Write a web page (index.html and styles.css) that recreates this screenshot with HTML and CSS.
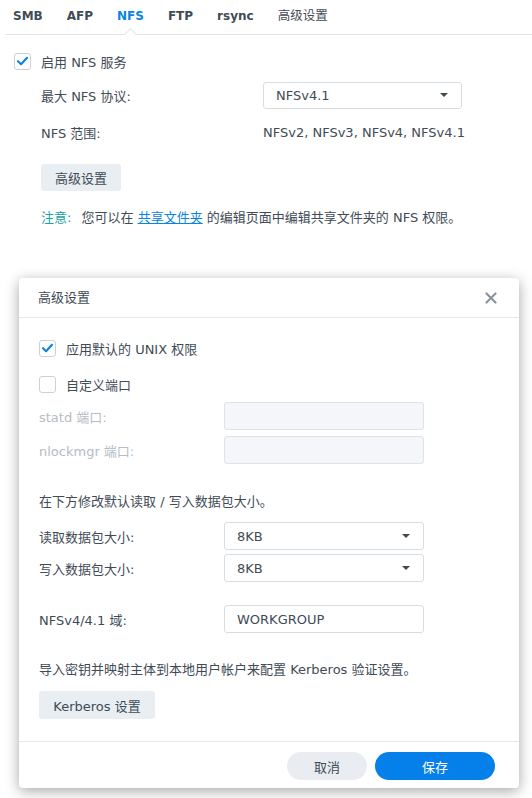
FILE: index.html
```html
<!DOCTYPE html>
<html lang="zh">
<head>
<meta charset="utf-8">
<link rel="stylesheet" href="styles.css">
</head>
<body>
<div class="page">
  <div class="tabs">
    <span class="tab">SMB</span>
    <span class="tab">AFP</span>
    <span class="tab active">NFS</span>
    <span class="tab">FTP</span>
    <span class="tab">rsync</span>
    <span class="tab">高级设置</span>
  </div>
  <div class="form">
    <label class="check-row">
      <span class="cb checked"><svg viewBox="0 0 16 16" width="16" height="16"><path d="M3.2 8.2 L6.5 11.4 L12.8 4.6" fill="none" stroke="#0a84e0" stroke-width="2.2" stroke-linecap="round" stroke-linejoin="round"/></svg></span>
      <span>启用 NFS 服务</span>
    </label>
    <div class="field-row r-select">
      <span class="lbl">最大 NFS 协议:</span>
      <div class="select wide"><span>NFSv4.1</span><span class="caret"></span></div>
    </div>
    <div class="field-row r-range">
      <span class="lbl">NFS 范围:</span>
      <span class="val">NFSv2, NFSv3, NFSv4, NFSv4.1</span>
    </div>
    <div class="btn-row"><span class="btn">高级设置</span></div>
    <div class="note"><span class="note-key">注意:</span> 您可以在 <a class="link">共享文件夹</a> 的编辑页面中编辑共享文件夹的 NFS 权限。</div>
  </div>

  <div class="dialog">
    <div class="dlg-head">
      <span class="dlg-title">高级设置</span>
      <svg class="close" viewBox="0 0 12 12" width="12" height="12"><path d="M1.5 1.5 L10.5 10.5 M10.5 1.5 L1.5 10.5" stroke="#8a949e" stroke-width="2.2" stroke-linecap="round"/></svg>
    </div>
    <div class="dlg-body">
      <label class="check-row d-cb1">
        <span class="cb checked"><svg viewBox="0 0 16 16" width="16" height="16"><path d="M3.2 8.2 L6.5 11.4 L12.8 4.6" fill="none" stroke="#0a84e0" stroke-width="2.2" stroke-linecap="round" stroke-linejoin="round"/></svg></span>
        <span>应用默认的 UNIX 权限</span>
      </label>
      <label class="check-row d-cb2">
        <span class="cb"></span>
        <span>自定义端口</span>
      </label>
      <div class="drow d-statd">
        <span class="dlbl disabled">statd 端口:</span>
        <div class="input disabled-input"></div>
      </div>
      <div class="drow d-nlock">
        <span class="dlbl disabled">nlockmgr 端口:</span>
        <div class="input disabled-input"></div>
      </div>
      <div class="desc d-desc">在下方修改默认读取 / 写入数据包大小。</div>
      <div class="drow d-read">
        <span class="dlbl">读取数据包大小:</span>
        <div class="select"><span>8KB</span><span class="caret"></span></div>
      </div>
      <div class="drow d-write">
        <span class="dlbl">写入数据包大小:</span>
        <div class="select"><span>8KB</span><span class="caret"></span></div>
      </div>
      <div class="drow d-domain">
        <span class="dlbl">NFSv4/4.1 域:</span>
        <div class="input"><span>WORKGROUP</span></div>
      </div>
      <div class="desc d-kdesc">导入密钥并映射主体到本地用户帐户来配置 Kerberos 验证设置。</div>
      <div class="d-kbtn"><span class="btn kbtn">Kerberos 设置</span></div>
    </div>
    <div class="dlg-foot">
      <span class="pill cancel">取消</span>
      <span class="pill save">保存</span>
    </div>
  </div>
</div>
</body>
</html>
```

FILE: styles.css
```css
* { box-sizing: border-box; }
html, body { margin: 0; padding: 0; background: #fff; }
body {
  font-family: "DejaVu Sans", "Noto Sans CJK SC", sans-serif;
  font-size: 13px;
  color: #414b55;
  width: 532px;
  height: 798px;
  overflow: hidden;
}
.page { display: flex; flex-direction: column; }

.tabs {
  position: relative;
  display: flex;
  gap: 24px;
  height: 35px;
  padding: 6px 0 0 8px;
  margin-left: 5px;
  border-bottom: 1px solid #dfe4ea;
  font-weight: 700;
  font-size: 12px;
  line-height: 20px;
}
.tab { color: #414b55; }
.tab.active { color: #0a84e0; position: relative; }
.tab.active::after {
  content: "";
  position: absolute;
  left: 50%;
  top: 24px;
  width: 8px;
  height: 8px;
  margin-left: -4px;
  background: #fff;
  border-left: 1px solid #dfe4ea;
  border-top: 1px solid #dfe4ea;
  transform: rotate(45deg);
}
.tabs .tab:last-child { font-weight: 400; font-size: 12.5px; }

.form { display: flex; flex-direction: column; padding-left: 14px; }
.check-row { display: flex; align-items: center; gap: 10px; height: 20px; }
.form > .check-row { margin-top: 16px; }
.cb {
  width: 17px; height: 17px;
  border: 1px solid #c9d1d9;
  border-radius: 3px;
  background: #fff;
  display: flex; align-items: center; justify-content: center;
  flex: none;
}
.cb svg { display: block; }

.field-row { display: flex; align-items: center; padding-left: 27px; }
.lbl { width: 222px; flex: none; }
.r-select { margin-top: 11px; height: 26px; }
.r-range { margin-top: 14px; height: 20px; }
.select, .input {
  width: 200px; height: 28px;
  border: 1px solid #d6dde4;
  border-radius: 3px;
  display: flex; align-items: center;
  padding: 0 12px;
  background: #fff;
  position: relative;
}
.select.wide { height: 27px; width: 199px; }
.caret {
  position: absolute; right: 13px; top: 50%;
  margin-top: -2px;
  width: 0; height: 0;
  border-left: 4.5px solid transparent;
  border-right: 4.5px solid transparent;
  border-top: 4.5px solid #414b55;
}
.btn-row { padding-left: 27px; margin-top: 22px; }
.btn {
  display: inline-flex; align-items: center; justify-content: center;
  width: 80px; height: 27px;
  background: #e9eef3;
  border-radius: 3px;
  color: #414b55;
}
.note { padding-left: 27px; margin-top: 17px; line-height: 20px; }
.note-key { color: #1aa3a3; margin-right: 6px; }
.link { color: #0a84e0; text-decoration: underline; }

.dialog {
  margin: 50px 0 0 19px;
  width: 500px;
  height: 510px;
  background: #fff;
  border-radius: 4px;
  box-shadow: 0 3px 14px rgba(0,0,0,0.35);
  display: flex; flex-direction: column;
}
.dlg-head {
  height: 40px;
  border-bottom: 1px solid #e2e7ec;
  display: flex; align-items: center; justify-content: space-between;
  padding: 0 22px 0 19px;
  flex: none;
}
.dlg-title { line-height: 20px; }
.dlg-body { padding: 20px 20px 0 20px; display: flex; flex-direction: column; flex: 1; border-bottom: 1px solid #e2e7ec; }
.d-cb2 { margin-top: 16px; }
.drow { display: flex; align-items: center; height: 28px; }
.dlbl { width: 185px; flex: none; }
.disabled { color: #b4bcc4; }
.disabled-input { background: #f4f6f9; border-color: #dde3e9; }
.d-statd { margin-top: 8px; }
.d-nlock { margin-top: 6px; }
.desc { line-height: 20px; }
.d-desc { margin-top: 28px; }
.d-read { margin-top: 10px; }
.d-write { margin-top: 4px; }
.d-domain { margin-top: 23px; }
.d-kdesc { margin-top: 27px; }
.d-kbtn { margin-top: 11px; }
.kbtn { width: 116px; height: 28px; }

.dlg-foot {
  height: 46px;
  display: flex; justify-content: flex-end; align-items: flex-start;
  gap: 8px;
  padding: 10px 24px 0 0;
  flex: none;
}
.pill {
  height: 28px; border-radius: 14px;
  display: flex; align-items: center; justify-content: center;
}
.cancel { width: 80px; background: #e9edf2; color: #414b55; }
.save { width: 120px; background: #0580eb; color: #fff; }
```
